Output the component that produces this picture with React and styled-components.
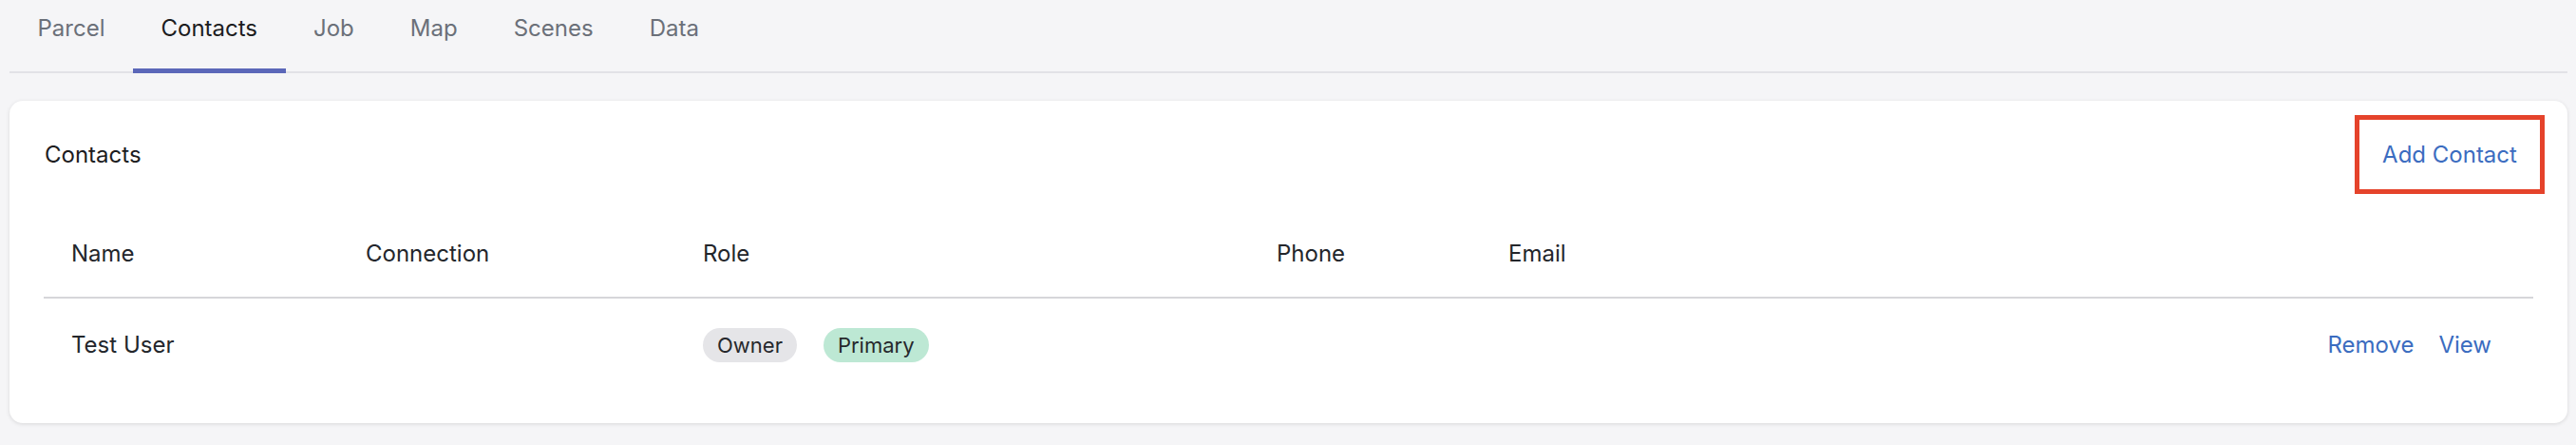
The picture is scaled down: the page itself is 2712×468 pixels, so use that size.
import styled, { createGlobalStyle } from 'styled-components';

const GlobalStyle = createGlobalStyle`
  html, body {
    margin: 0;
    padding: 0;
    background-color: #f5f5f7;
  }
  body {
    font-family: Inter, 'Liberation Sans', sans-serif;
    color: #23262b;
  }
`;

const Page = styled.div`
  box-sizing: border-box;
  width: 2712px;
  height: 468px;
  padding: 0 9px 0 10px;
`;

const TabBar = styled.ul`
  list-style: none;
  margin: 0;
  padding: 0;
  display: flex;
  height: 77px;
  border-bottom: 2px solid #e2e2e7;
  box-sizing: border-box;
`;

const Tab = styled.li`
  box-sizing: border-box;
  height: 77px;
  margin-bottom: -2px;
  padding: 0 29.5px 14px;
  display: flex;
  align-items: center;
  font-size: 24px;
  color: ${(p) => (p.active ? '#1c1c1e' : '#6b7079')};
  border-bottom: 5px solid ${(p) => (p.active ? '#5b67b9' : 'transparent')};
  cursor: pointer;
`;

const Card = styled.section`
  margin-top: 29px;
  box-sizing: border-box;
  height: 339px;
  background-color: #fff;
  border-radius: 14px;
  box-shadow: 0 1px 4px rgba(0, 0, 0, 0.12);
  padding: 15px 36px 36px;
`;

const CardHeader = styled.div`
  display: flex;
  justify-content: space-between;
  align-items: center;
  height: 82px;
`;

const Title = styled.h2`
  margin: 0;
  padding-left: 1px;
  font-size: 24px;
  font-weight: 400;
  color: #1c1c1e;
`;

const AddButton = styled.button`
  box-sizing: border-box;
  height: 83px;
  width: 200px;
  margin-right: -12px;
  background: #fff;
  border: 5px solid #e5432b;
  font-family: inherit;
  font-size: 24px;
  color: #3b6cc0;
  cursor: pointer;
`;

const Table = styled.div`
  margin-top: 18px;
  display: grid;
  grid-template-columns: 310px 355px 604px 244px 1fr auto;
`;

const HeadCell = styled.div`
  height: 93px;
  box-sizing: border-box;
  border-bottom: 2px solid #d6d6da;
  padding: 0 29px 0;
  display: flex;
  align-items: center;
  font-size: 24px;
  color: #23262b;
`;

const Cell = styled.div`
  height: 97px;
  box-sizing: border-box;
  padding: 0 29px;
  display: flex;
  align-items: center;
  gap: 26px;
  font-size: 24px;
  color: #23262b;
  justify-content: ${(p) => (p.end ? 'flex-end' : 'flex-start')};
  padding-right: ${(p) => (p.end ? '44px' : '29px')};
`;

const Pill = styled.span`
  display: inline-flex;
  align-items: center;
  height: 36px;
  padding: 0 15px;
  border-radius: 18px;
  font-size: 22px;
  color: #26282c;
  background-color: ${(p) => (p.tone === 'green' ? '#bde8d4' : '#e5e5e8')};
`;

const Pills = styled.div`
  display: flex;
  gap: 28px;
`;

const LinkButton = styled.a`
  font-size: 24px;
  color: #3b6cc0;
  text-decoration: none;
  cursor: pointer;
`;

const tabs = ['Parcel', 'Contacts', 'Job', 'Map', 'Scenes', 'Data'];
const columns = ['Name', 'Connection', 'Role', 'Phone', 'Email', ''];

const contacts = [
  { id: 1, name: 'Test User', connection: '', roles: ['Owner', 'Primary'], phone: '', email: '' },
];

function App() {
  return (
    <>
      <GlobalStyle />
      <Page>
        <TabBar>
          {tabs.map((t) => (
            <Tab key={t} active={t === 'Contacts'}>
              {t}
            </Tab>
          ))}
        </TabBar>
        <Card>
          <CardHeader>
            <Title>Contacts</Title>
            <AddButton>Add Contact</AddButton>
          </CardHeader>
          <Table>
            {columns.map((c, i) => (
              <HeadCell key={i}>{c}</HeadCell>
            ))}
            {contacts.map((c) => [
              <Cell key={`${c.id}-name`}>{c.name}</Cell>,
              <Cell key={`${c.id}-conn`}>{c.connection}</Cell>,
              <Cell key={`${c.id}-role`}>
                <Pills>
                  {c.roles.map((r) => (
                    <Pill key={r} tone={r === 'Primary' ? 'green' : 'gray'}>
                      {r}
                    </Pill>
                  ))}
                </Pills>
              </Cell>,
              <Cell key={`${c.id}-phone`}>{c.phone}</Cell>,
              <Cell key={`${c.id}-email`}>{c.email}</Cell>,
              <Cell key={`${c.id}-actions`} end>
                <LinkButton>Remove</LinkButton>
                <LinkButton>View</LinkButton>
              </Cell>,
            ])}
          </Table>
        </Card>
      </Page>
    </>
  );
}

export default App;
